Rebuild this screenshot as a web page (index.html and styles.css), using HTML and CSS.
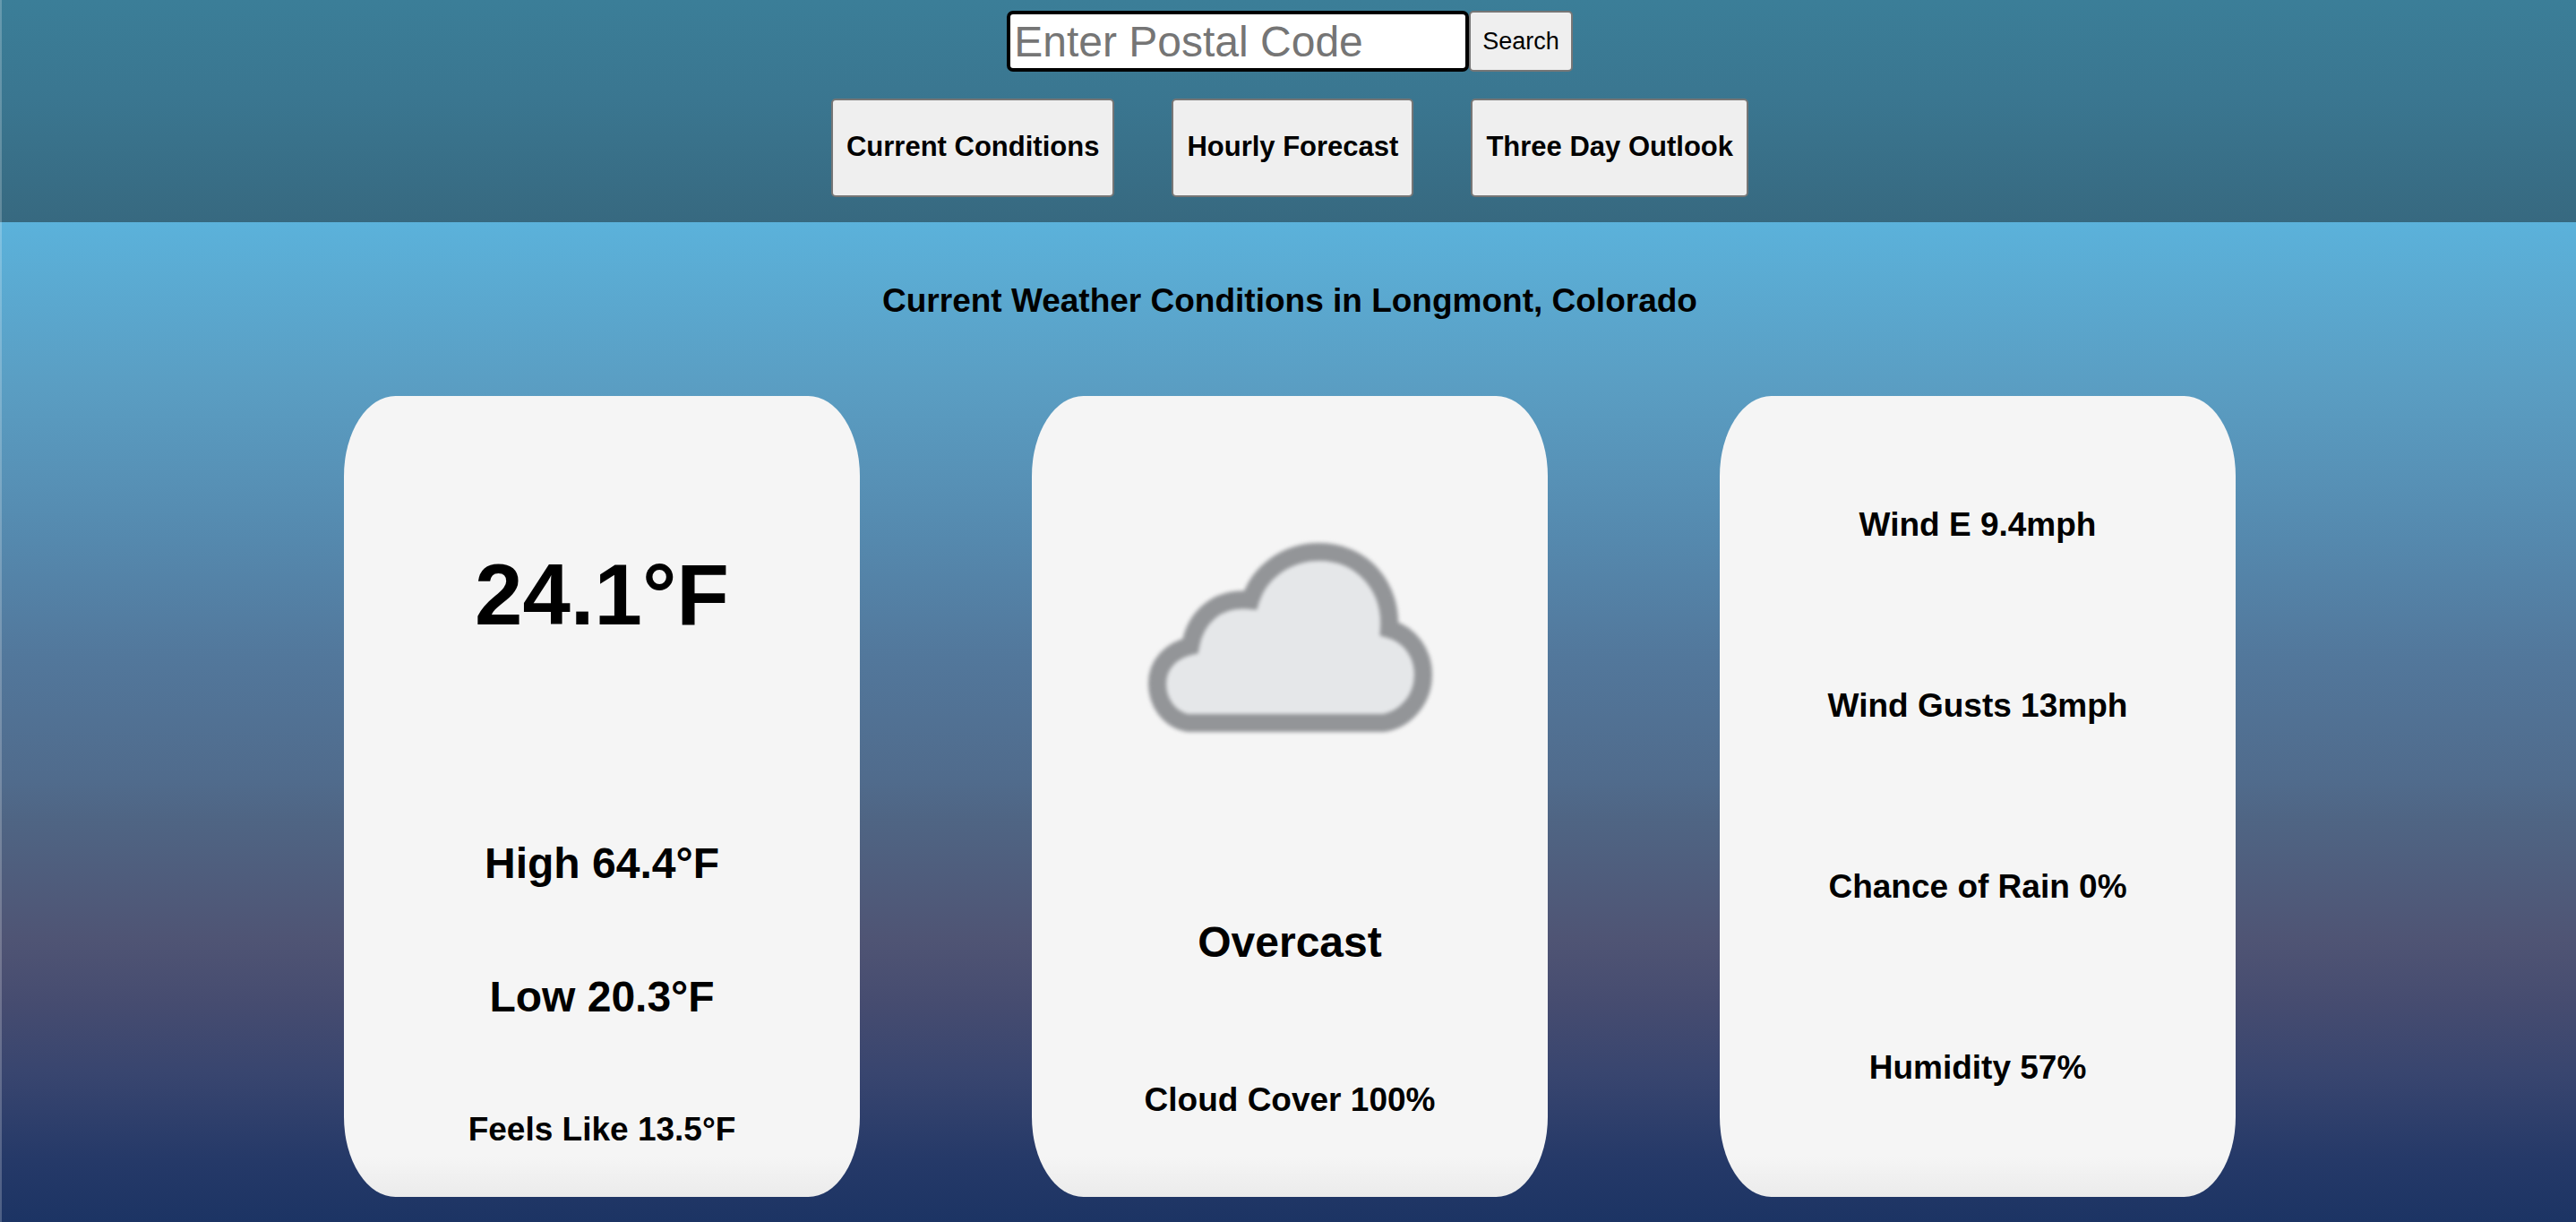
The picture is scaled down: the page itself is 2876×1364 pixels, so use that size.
FILE: index.html
```html
<!DOCTYPE html>
<html lang="en">
<head>
  <meta charset="utf-8">
  <meta name="viewport" content="width=device-width, initial-scale=1">
  <title>Weather</title>
  <link rel="stylesheet" href="styles.css">
</head>
<body>
  <header class="header">
    <form class="search">
      <input class="search-input" type="text" aria-label="Postal code" placeholder="Enter Postal Code">
      <button class="search-button" type="button">Search</button>
    </form>
    <nav class="nav">
      <button class="nav-button" type="button">Current Conditions</button>
      <button class="nav-button" type="button">Hourly Forecast</button>
      <button class="nav-button" type="button">Three Day Outlook</button>
    </nav>
  </header>
  <main class="main">
    <h1 class="title">Current Weather Conditions in Longmont, Colorado</h1>
    <div class="cards">
      <section class="card card-temperature">
        <p class="temperature">24.1°F</p>
        <p class="large">High 64.4°F</p>
        <p class="large">Low 20.3°F</p>
        <p class="detail">Feels Like 13.5°F</p>
      </section>
      <section class="card card-sky">
        <svg class="cloud" viewBox="0 0 400 300" role="img" aria-label="Overcast">
          <path d="M86 247 C65 243 52 224 52 203 C52 182 67 166 89 161 C94 131 117 106 156 110 C165 80 195 56 233 56 C281 56 314 95 311 142 C334 148 349 169 349 193 C349 221 329 243 305 247 Z" fill="#e5e7e9" stroke="#939598" stroke-width="20"/>
        </svg>
        <p class="large">Overcast</p>
        <p class="detail">Cloud Cover 100%</p>
      </section>
      <section class="card card-details">
        <p class="detail">Wind E 9.4mph</p>
        <p class="detail">Wind Gusts 13mph</p>
        <p class="detail">Chance of Rain 0%</p>
        <p class="detail">Humidity 57%</p>
      </section>
    </div>
  </main>
</body>
</html>
```
FILE: styles.css
```css
* {
  box-sizing: border-box;
}

body {
  margin: 0;
  min-height: 100vh;
  font-family: "Liberation Sans", Arial, sans-serif;
  color: #000;
  background: linear-gradient(#5cc0e8 0%, #5bb2db 18%, #5a9dc2 32%, #5589ae 44%, #52779b 54%, #506b8c 64%, #4f6584 67%, #4f5474 77%, #464c70 82%, #38456f 88%, #253968 95%, #1c3464 100%);
}

/* Light edge along the left side of the window */
body::before {
  content: "";
  position: fixed;
  inset: 0 auto 0 0;
  width: 2px;
  background: rgba(255, 255, 255, 0.22);
}

.header {
  display: flex;
  flex-direction: column;
  align-items: center;
  gap: 30px;
  padding: 12px 0 28px 4px;
  background: linear-gradient(#3b7e98, #3a7690 45%, #376980);
}

.search {
  display: flex;
}

.search-input {
  width: 516px;
  height: 68px;
  padding: 0 4px;
  border: 4px solid #000;
  border-radius: 7px;
  background: #fff;
  font: 48px "Liberation Sans", Arial, sans-serif;
}

.search-input::placeholder {
  color: #757575;
}

.search-button,
.nav-button {
  border: 2px solid #767676;
  border-radius: 5px;
  background: #efefef;
  color: #000;
  font-family: inherit;
}

.search-button {
  padding: 0 13px;
  font-size: 27px;
}

.nav {
  display: flex;
  gap: 64px;
}

.nav-button {
  height: 110px;
  padding: 0 15px 2px;
  font-size: 31px;
  font-weight: bold;
}

.main {
  padding: 67px 0 28px 4px;
}

.title {
  margin: 0;
  font-size: 37px;
  line-height: 42px;
  text-align: center;
}

.cards {
  display: grid;
  grid-template-columns: repeat(3, 1fr);
  column-gap: 192px;
  max-width: 2112px;
  margin: 85px auto 0;
}

.card {
  display: flex;
  flex-direction: column;
  align-items: center;
  min-height: 894px;
  border-radius: 10%;
  background: linear-gradient(#f5f5f5 95%, #ebebeb);
  font-weight: bold;
}

.card p {
  margin: 0;
}

.temperature {
  font-size: 96px;
  line-height: 110px;
}

.large {
  font-size: 48px;
  line-height: 56px;
}

.detail {
  font-size: 37px;
  line-height: 42px;
}

.card-temperature {
  padding-top: 167px;
  gap: 93px;
}

.card-temperature .temperature {
  margin-bottom: 124px;
}

.card-temperature .detail {
  margin-top: 6px;
}

.card-sky {
  padding-top: 118px;
}

.cloud {
  width: 400px;
  height: 300px;
  margin-bottom: 164px;
  filter: blur(2px);
}

.card-sky .detail {
  margin-top: 127px;
}

.card-details {
  padding-top: 123px;
  gap: 160px;
}
```
